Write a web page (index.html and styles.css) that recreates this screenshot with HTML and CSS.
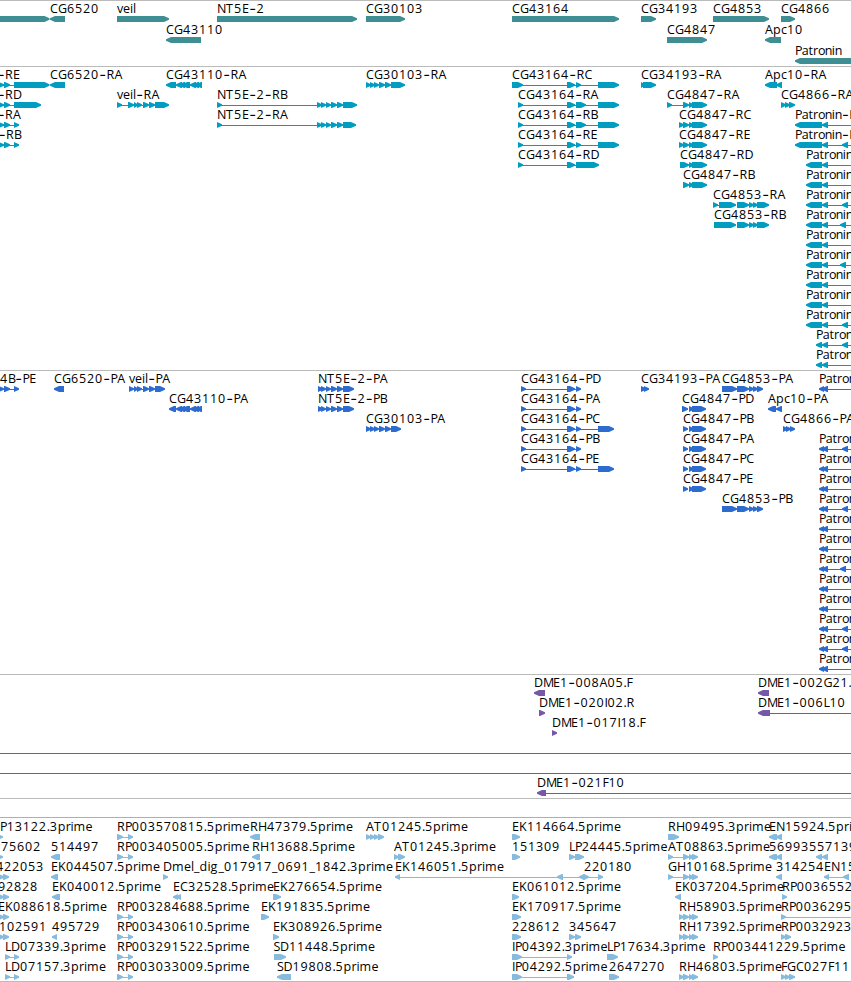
FILE: index.html
```html
<!DOCTYPE html>
<html lang="en">
<head>
<meta charset="utf-8">
<title>Genome tracks</title>
<link rel="stylesheet" href="styles.css">
</head>
<body>
<main class="browser">
  <section class="track genes" id="genes"></section>
  <section class="track transcripts" id="transcripts"></section>
  <section class="track proteins" id="proteins"></section>
  <section class="track bacs" id="bacs"></section>
  <section class="track ests" id="ests"></section>
</main>
<script src="tracks.js"></script>
</body>
</html>
```
FILE: styles.css
```css
body {
  margin: 0;
  background: #fff;
  overflow: hidden;
}
.browser {
  display: flex;
  flex-direction: column;
  width: 851px;
  height: 981px;
  border-bottom: 1px solid #bbb;
}
.track {
  box-sizing: border-box;
  border-top: 1px solid #bbb;
  overflow: hidden;
}
.track svg {
  display: block;
  width: 851px;
  height: 100%;
}
.track text {
  font: 12.5px "Open Sans", "Noto Sans", sans-serif;
  fill: #000;
}
.track .dash {
  font: 15px Inter, sans-serif;
}
.genes { height: 66px; color: #3e8e93; }
.transcripts { height: 304px; color: #009dc0; }
.proteins { height: 304px; color: #2e6bcf; }
.bacs { height: 124px; color: #7657a8; }
.ests { height: 183px; color: #87bbdd; }
.track path { fill: currentColor; }
```
FILE: tracks.js
```js
// Feature: [row, label x, label, glyphs]. Glyphs: ">a-b" / "<a-b" are strand arrows, "~a-b" is an intron line.
const advances = {
  C: 8, G: 9, '-': 7.5, R: 8, A: 8, B: 7, D: 9, E: 7, F: 6, H: 9, I: 3, K: 8, L: 6, M: 10, N: 9, P: 6.7, S: 6.5, T: 8,
  '.': 3, _: 5.5, a: 6.7, c: 6, d: 8, e: 7, g: 8, i: 3, l: 3, m: 12, n: 7, o: 6.8, p: 8, r: 4.9, t: 4.7, v: 6
};
const svgNS = 'http://www.w3.org/2000/svg';

function arrow(dir, a, b, y) {
  const h = Math.min(5, b - a);
  return dir === '>'
    ? `M${a} ${y}H${b - h}L${b} ${y + 2.3}V${y + 3.7}L${b - h} ${y + 6}H${a}Z`
    : `M${b} ${y}V${y + 6}H${a + h}L${a} ${y + 3.7}V${y + 2.3}L${a + h} ${y}Z`;
}

function line(a, b, y) {
  return `M${a} ${y}H${b}v1H${a}Z`;
}

function addPath(svg, d) {
  const p = document.createElementNS(svgNS, 'path');
  p.setAttribute('d', d);
  svg.append(p);
}

function draw(id, step, features) {
  const svg = document.createElementNS(svgNS, 'svg');
  for (const [row, x, label, glyphs] of features) {
    const top = row * step - 1;
    if (label) {
      const t = document.createElementNS(svgNS, 'text');
      let pos = x;
      for (const part of label.split(/(-)/)) {
        if (!part) continue;
        const span = document.createElementNS(svgNS, 'tspan');
        const dash = part === '-';
        const xs = [];
        for (const ch of part) {
          xs.push(dash ? pos + 0.3 : pos);
          pos += advances[ch] || 8;
        }
        span.setAttribute('x', xs.join(' '));
        span.setAttribute('y', top + (dash ? 14 : 13));
        if (dash) span.setAttribute('class', 'dash');
        span.textContent = part;
        t.append(span);
      }
      svg.append(t);
    }
    for (const g of glyphs.trim().split(' ')) {
      const [, kind, a, b] = g.match(/^([<>~])(-?[\d.]+)-([\d.]+)$/);
      addPath(svg, kind === '~' ? line(a, b, top + 19) : arrow(kind, +a, +b, top + 16));
    }
  }
  document.getElementById(id).append(svg);
}

draw('genes', 21, [
  [0, 0, '', '>-10-49.5'], [0, 50, 'CG6520', '<50-65'], [0, 117, 'veil', '>117-169'],
  [1, 166, 'CG43110', '<166-201'], [0, 217, 'NT5E-2', '>217-357'], [0, 366, 'CG30103', '>366-405'],
  [0, 512, 'CG43164', '>512-619'], [0, 641, 'CG34193', '>641-656'], [1, 667, 'CG4847', '>667-707'],
  [0, 713, 'CG4853', '>713-769'], [1, 765, 'Apc10', '<765-781'], [0, 781, 'CG4866', '>781-795'],
  [2, 795, 'Patronin', '<795-860']
]);

const head = '>-2-4 >4-10 ~0-14 ';
const left = '<176-182 <179-185 <182-190 ~190-192 <190-196 <193-199 <196-202';
const veil = '>134-138 >137-142 ~142-144 >143-149 >149-155 ';
const nt = '>317-322 >321-326 >326-331 >331-337 >337-343 ';
const cg301 = '>366-371 >370-375 >374-379 >379-385 >385-391 ';
const tail = '>689-694 >692-707';
const cg4853 = '>737-749 >749-754 >753-758 >757-769';
draw('transcripts', 20, [
  [0, -2.5, '-RE', head + '>14-49.5'], [1, -2.5, '-RD', head + '>14-41'],
  [2, -2.5, '-RA', head + '>14-19'], [3, -1.5, '-RB', head + '>14-19'],
  [0, 50, 'CG6520-RA', '<50-65'], [0, 166, 'CG43110-RA', '<166-176 ' + left],
  [1, 117, 'veil-RA', '>117-122 ~117-130 >128-134 ' + veil + '>155-169'],
  [1, 217, 'NT5E-2-RB', '>217-222 ~217-320 ' + nt + '>343-357'],
  [2, 217, 'NT5E-2-RA', '>217-222 ~217-320 ' + nt + '>343-356'],
  [0, 366, 'CG30103-RA', cg301 + '>391-405'],
  [0, 512, 'CG43164-RC', '>512-523 ~512-600 >567-575 >576-581 >598-619'],
  [1, 518, 'CG43164-RA', '>518-523 ~518-600 >567-575 >576-586 >598-619'],
  [2, 518, 'CG43164-RB', '>518-523 ~518-600 >567-575 >576-586 >598-619'],
  [3, 518, 'CG43164-RE', '>518-523 ~518-600 >567-575 >576-581 >598-619'],
  [4, 518, 'CG43164-RD', '>518-523 ~518-577 >567-575 >576-599'],
  [0, 641, 'CG34193-RA', '>641-645 >643-656'],
  [1, 667, 'CG4847-RA', '>667-672 ~667-684 >683-689 ' + tail],
  [2, 679, 'CG4847-RC', '>679-684 >683-689 ' + tail], [3, 679, 'CG4847-RE', '>679-684 >683-689 ' + tail],
  [4, 680, 'CG4847-RD', '>680-689 ' + tail], [5, 683, 'CG4847-RB', '>683-689 ' + tail],
  [0, 765, 'Apc10-RA', '<765-777 <776-782'], [1, 781, 'CG4866-RA', '>781-786 >785-790 >789-795'],
  [6, 713, 'CG4853-RA', '>713-718 ~716-720 >719-736 ' + cg4853], [7, 714, 'CG4853-RB', '>714-736 ' + cg4853],
  [2, 795, 'Patronin-RA', '<795-822 <822-828 ~822-851'],
  [3, 795, 'Patronin-RB', '<795-822 <822-828 ~822-851 <842-848'],
  ...[4, 5, 6, 7, 8, 9, 10, 11, 12].map(r => [r, 806, 'Patronin', '<806-822 <822-828 ~822-851' +
    ({ 6: ' <842-848', 7: ' <840-846', 9: ' <840-846', 12: ' <842-848' }[r] || '')]),
  [13, 816, 'Patroni', '<816-822 <822-828 ~822-851 <842-848'],
  [14, 816, 'Patroni', '<816-822 <822-828 ~822-851']
]);

const tailP = '>689-694 >692-706';
const cg4853P = '>722-737 >737-749 >749-754 >753-758 >757-763';
const cg431P = '>521-526 ~521-577 >567-575 >576-581';
draw('proteins', 20, [
  [0, 0, '4B-PE', head + '>14-19'], [0, 54, 'CG6520-PA', '<54-64'],
  [0, 129, 'veil-PA', '>129-134 ' + veil + '>155-165'], [1, 169, 'CG43110-PA', '<169-176 ' + left],
  [0, 318, 'NT5E-2-PA', '>318-323 ' + nt.slice(9) + '>343-354'],
  [1, 318, 'NT5E-2-PB', '>318-323 ' + nt.slice(9) + '>343-354'],
  [2, 366, 'CG30103-PA', cg301 + '>391-401'],
  [0, 521, 'CG43164-PD', cg431P], [1, 521, 'CG43164-PA', cg431P],
  [2, 521, 'CG43164-PC', cg431P + ' ~577-600 >598-614'], [3, 521, 'CG43164-PB', cg431P],
  [4, 521, 'CG43164-PE', cg431P + ' ~577-600 >598-614'],
  [0, 641, 'CG34193-PA', '>641-646 >644-649'], [0, 722, 'CG4853-PA', cg4853P], [6, 722, 'CG4853-PB', cg4853P],
  [1, 682, 'CG4847-PD', '>682-688 ' + tailP],
  ...['B', 'A', 'C', 'E'].map((s, i) => [i + 2, 683, 'CG4847-P' + s, '>683-688 ' + tailP]),
  [1, 768, 'Apc10-PA', '<768-776 <776-782'], [2, 783, 'CG4866-PA', '>783-788 >786-791 >790-795'],
  ...[0, 3, 4, 5, 6, 7, 8, 9, 10, 11, 12, 13, 14].map(r => [r, 819, 'Patron', '<819-824 <822-828 ~822-851' +
    ({ 3: ' <842-848', 6: ' <842-848', 9: ' <840-846', 12: ' <842-848', 13: ' <842-848' }[r] || '')])
]);

draw('bacs', 20, [
  [0, 534, 'DME1-008A05.F', '<534-545'], [1, 539, 'DME1-020I02.R', '>539-545'],
  [2, 552, 'DME1-017I18.F', '>552-557'], [0, 758, 'DME1-002G21.F', '<758-769'],
  [1, 758, 'DME1-006L10', '<758-770 ~760-851'], [3, 0, '', '~0-851'], [4, 0, '', '~0-851'],
  [5, 537, 'DME1-021F10', '<537-546 ~540-851']
]);

const pair = '>117-123 ~117-130 >128-133';
const four = '>679-684 >683-689 >689-694 >692-698';
const split = '>668-673 ~668-684 >683-689 >689-694 >692-698';
draw('ests', 20, [
  [0, 0, '', '~0-851'],
  [1, 0, 'P13122.3prime', '>-3-3'], [1, 117, 'RP003570815.5prime', pair], [1, 250, 'RH47379.5prime', '<250-260'],
  [1, 366, 'AT01245.5prime', '>366-371 >370-375 >374-379 >378-384'], [1, 512, 'EK114664.5prime', '>512-520'],
  [1, 668, 'RH09495.3prime', '>668-679'], [1, 769, 'EN15924.5prime', '<769-777 <776-782'],
  [2, 1, '75602', '>-3-3'], [2, 51, '514497', '<51-60'], [2, 117, 'RP003405005.5prime', pair],
  [2, 252, 'RH13688.5prime', '<252-260'], [2, 394, 'AT01245.3prime', '>394-399 >398-405'],
  [2, 512, '151309', '>512-520'], [2, 569, 'LP24445.5prime', '>569-575 >575-584'],
  [2, 668, 'AT08863.5prime', split], [2, 769, '569935', '<769-777 <776-782'], [2, 817, '571390', '<816-822 <822-828'],
  [3, -4, '422053', '>-1-4 >3-9'], [3, 51, 'EK044507.5prime', '<51-58'],
  [3, 163, 'Dmel_dig_017917_0691_1842.3prime', '>163-168'],
  [3, 395, 'EK146051.5prime', '<395-400 ~395-584 <557-563'],
  [3, 584, '220180', '<579-585 >583-589 ~583-600 >598-603'], [3, 668, 'GH10168.5prime', split],
  [3, 776, '314254', '<776-782'], [3, 824, 'EN15924', '<824-829 ~824-848 <843-849'],
  [4, -2, '92828', '>-1-4 >3-9'], [4, 52, 'EK040012.5prime', '<52-60'], [4, 173, 'EC32528.5prime', '<173-178 <176-181'],
  [4, 273, 'EK276654.5prime', '>273-281'], [4, 512, 'EK061012.5prime', '>512-519'],
  [4, 675, 'EK037204.5prime', '<675-681'], [4, 782, 'RP003655239', '>782-787'],
  [5, -2, 'EK088618.5prime', '>-1-4 >3-9'], [5, 117, 'RP003284688.5prime', pair],
  [5, 261, 'EK191835.5prime', '>261-269'], [5, 512, 'EK170917.5prime', '>512-521'],
  [5, 679, 'RH58903.5prime', four], [5, 781, 'RP003629590', '>781-786 ~781-851'],
  [6, -1, '102591', '>-1-4 >3-9'], [6, 52, '495729', '<52-57'], [6, 117, 'RP003430610.5prime', pair],
  [6, 273, 'EK308926.5prime', '>273-279'], [6, 512, '228612', '>512-521'], [6, 569, '345647', '>569-575 >575-581'],
  [6, 679, 'RH17392.5prime', four], [6, 781, 'RP003292390', '>781-786 >785-791'],
  [7, 5, 'LD07339.3prime', '>5-10 ~5-16 >14-19'], [7, 117, 'RP003291522.5prime', pair],
  [7, 273.5, 'SD11448.5prime', '>274-286'], [7, 512, 'IP04392.3prime', '>512-522 ~512-568 >567-572'],
  [7, 607, 'LP17634.3prime', '>607-618'], [7, 713, 'RP003441229.5prime', '>713-718'],
  [8, 5, 'LD07157.3prime', '>5-10 ~5-16 >14-19'], [8, 117, 'RP003033009.5prime', pair],
  [8, 277, 'SD19808.5prime', '<277-291'], [8, 512, 'IP04292.5prime', '>512-522 ~512-568 >567-574'],
  [8, 609, '2647270', '>609-619'], [8, 679, 'RH46803.5prime', four],
  [8, 781, 'FGC027F11', '>781-786 >785-790 >789-795']
]);
```
